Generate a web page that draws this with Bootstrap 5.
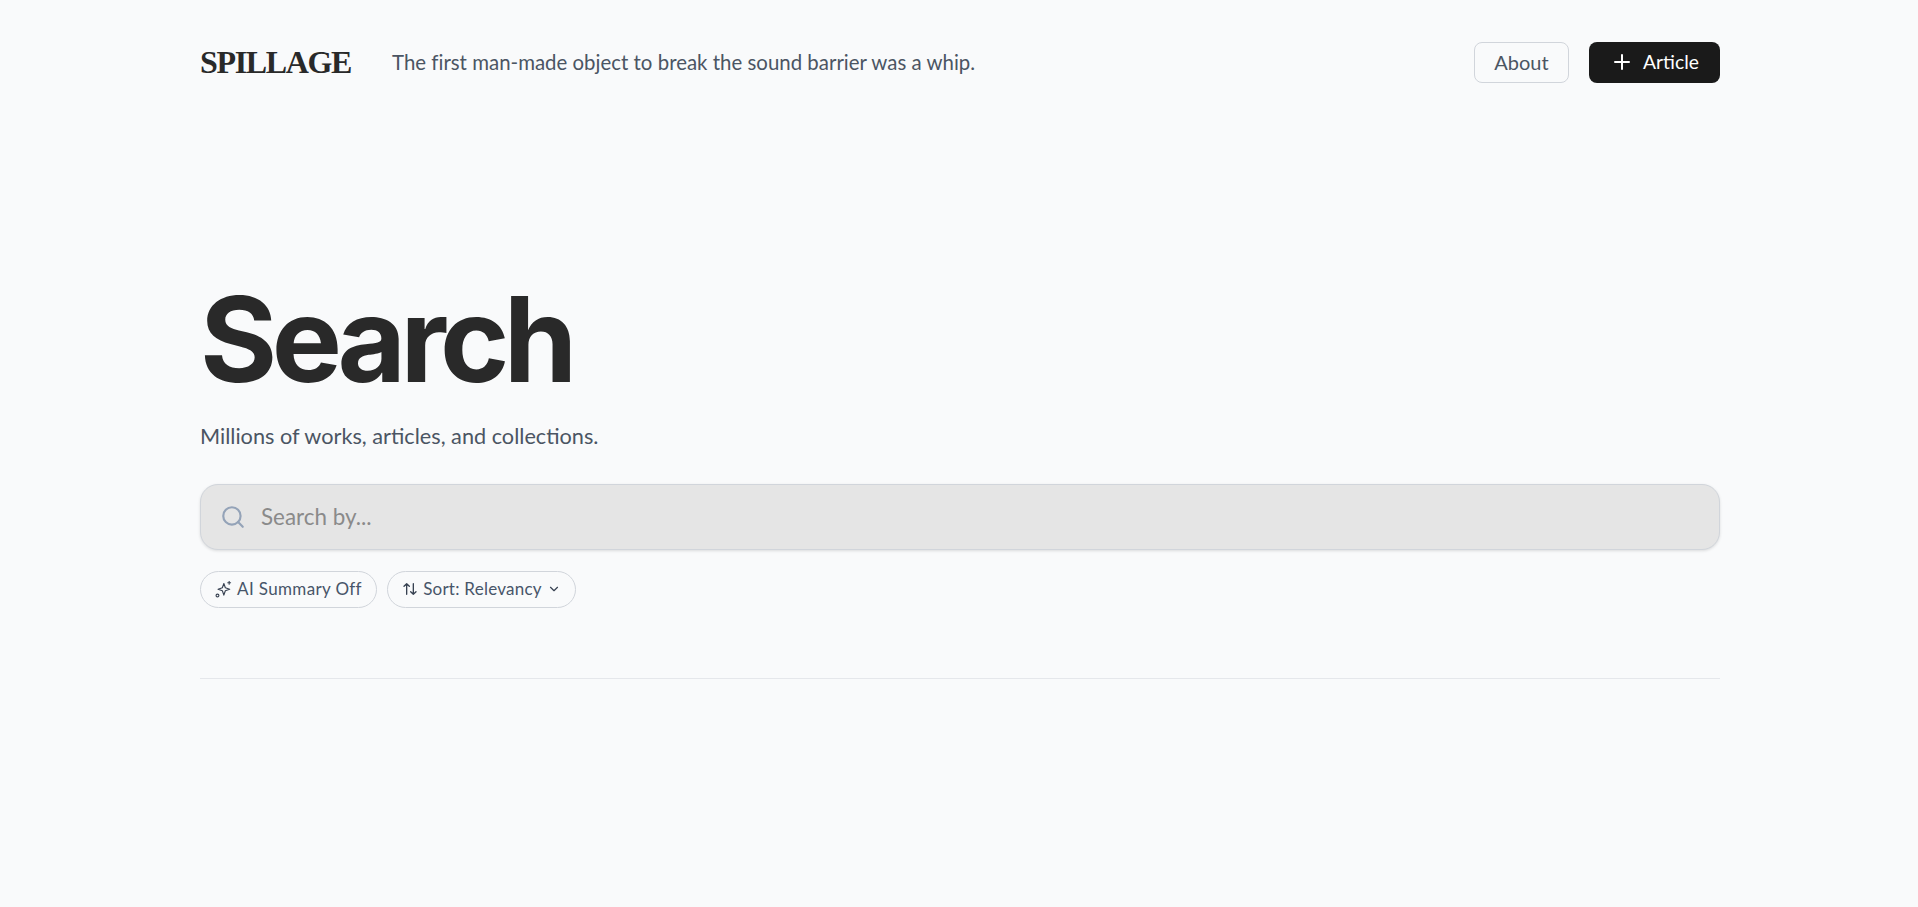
<!DOCTYPE html>
<html lang="en"><head><meta charset="utf-8"><title>Spillage</title>
<link href="https://cdn.jsdelivr.net/npm/bootstrap@5.3.0/dist/css/bootstrap.min.css" rel="stylesheet">
<style>
html,body{height:100%}
body{background:#f9fafb;font-family:"Lato","Noto Sans",sans-serif;color:#4b5563;overflow:hidden}
.shell{width:1520px;margin-left:200px}
.topbar{height:42px;margin-top:41px}
.brand{font-family:"Liberation Serif",serif;font-weight:700;font-size:32px;letter-spacing:-1.35px;color:#292929;line-height:1;width:192px}
.tagline{font-size:20.4px;font-weight:400;color:#4b5563;letter-spacing:.02px}
.btn-about{height:41px;width:95px;border:1px solid #d1d5db;border-radius:8px;font-size:20px;color:#4b5563;background:transparent;padding:0}
.btn-article{height:41px;width:131px;border-radius:8px;background:#1a1a1a;color:#fff;font-size:19.3px;padding:0;border:0;gap:9px}
.btn-article:hover{background:#1a1a1a;color:#fff}
.hero{font-family:"Inter","Lato",sans-serif;font-size:118px;font-weight:700;letter-spacing:-5.6px;line-height:1;color:#292929;padding-top:197px}
.sub{font-size:21.7px;color:#4b5563;margin-top:22px}
.searchbox{height:66px;background:#e5e5e5;border:1px solid #d1d5db;border-radius:18px;box-shadow:0 1px 3px rgba(0,0,0,.12);margin-top:31px;padding-left:19px;gap:13px}
.searchbox input{background:transparent;border:0;outline:0;flex:1;font-size:22.4px;color:#4b5563}
.searchbox input::placeholder{color:#8a8a8a}
.chip{height:37px;border:1px solid #d1d5db;border-radius:19px;background:transparent;font-size:17px;letter-spacing:.35px;color:#475569;padding:0;gap:5px}
.chip-ai{width:177px}
.chip-sort{width:189px;letter-spacing:.25px}
.chip-row{gap:10px;margin-top:21px}
.rule{border-top:1px solid #e5e7eb;margin-top:70px}
</style></head><body>
<div class="shell">
<header class="topbar d-flex align-items-center">
<div class="brand">SPILLAGE</div>
<div class="tagline">The first man-made object to break the sound barrier was a whip.</div>
<div class="ms-auto d-flex align-items-center gap-3">
<button class="btn btn-about me-1">About</button>
<button class="btn btn-article d-flex align-items-center justify-content-center"><svg width="24" height="24" viewBox="0 0 24 24" fill="none" stroke="#fff" stroke-width="2" stroke-linecap="round"><path d="M5 12h14M12 5v14"/></svg>Article</button>
</div></header>
<h1 class="hero mb-0">Search</h1>
<p class="sub mb-0">Millions of works, articles, and collections.</p>
<div class="searchbox d-flex align-items-center">
<svg width="26" height="26" viewBox="0 0 24 24" fill="none" stroke="#94a3b8" stroke-width="2" stroke-linecap="round"><circle cx="11" cy="11" r="8"/><path d="m21 21-4.3-4.3"/></svg>
<input type="text" placeholder="Search by...">
</div>
<div class="d-flex chip-row">
<button class="btn chip chip-ai d-flex align-items-center justify-content-center"><svg width="17" height="17" viewBox="0 0 24 24" fill="none" stroke="#374151" stroke-width="1.6" stroke-linecap="round" stroke-linejoin="round"><path d="M12.500 3.500l2.100 6.100 6.100 2.100-6.100 2.100-2.100 6.100-2.100-6.100-6.100-2.100 6.100-2.100z"/><path d="M20 .5v4M18 2.500h4"/><circle cx="3.500" cy="20.500" r="2"/></svg>AI Summary Off</button>
<button class="btn chip chip-sort d-flex align-items-center justify-content-center"><svg width="16" height="16" viewBox="0 0 24 24" fill="none" stroke="#374151" stroke-width="2" stroke-linecap="round" stroke-linejoin="round"><path d="m21 16-4 4-4-4M17 20V4M3 8l4-4 4 4M7 4v16"/></svg>Sort: Relevancy<svg width="14" height="14" viewBox="0 0 24 24" fill="none" stroke="#374151" stroke-width="2" stroke-linecap="round" stroke-linejoin="round"><path d="m6 9 6 6 6-6"/></svg></button>
</div>
<div class="rule"></div>
</div>
</body></html>
